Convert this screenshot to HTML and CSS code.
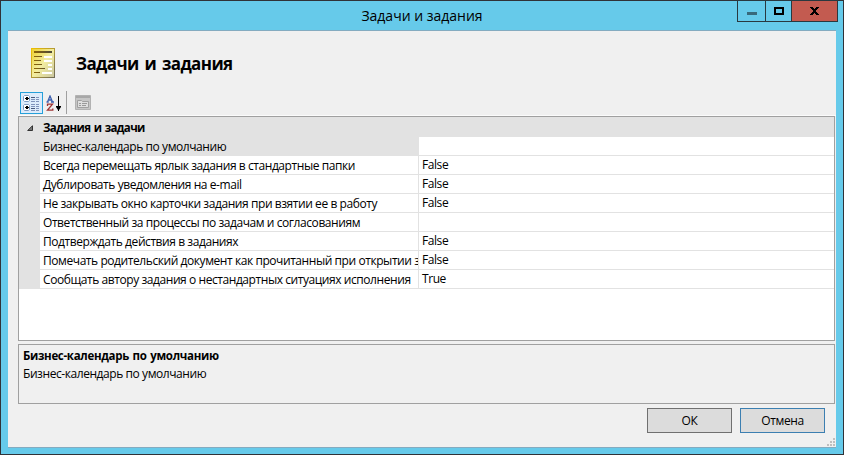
FILE: index.html
```html
<!DOCTYPE html>
<html lang="ru">
<head>
<meta charset="utf-8">
<title>Задачи и задания</title>
<link rel="stylesheet" href="styles.css">
</head>
<body>
<div class="window">
  <header class="titlebar">
    <span class="caption">Задачи и задания</span>
    <div class="controls">
      <span class="ctl min"><svg width="10" height="3"><rect width="10" height="3" fill="#38697b"/></svg></span>
      <span class="ctl max"><svg width="10" height="8"><path fill="#000" fill-rule="evenodd" d="M0 0h10v8H0zM2 2v4h6V2z"/></svg></span>
      <span class="ctl close"><svg width="9" height="8" shape-rendering="crispEdges"><path fill="#000" d="M0 0h3v1h1v1h1V1h1V0h3v1H8v1H7v1H6v2h1v1h1v1h1v1H6V7H5V6H4v1H3v1H0V7h1V6h1V5h1V3H2V2H1V1H0z"/></svg></span>
    </div>
  </header>
  <main class="client">
    <div class="heading">
      <svg width="24" height="30" viewBox="0 0 24 30">
        <defs>
          <linearGradient id="edge" x1="0" y1="0" x2="1" y2="1"><stop offset="0" stop-color="#f0c000"/><stop offset=".5" stop-color="#b39a35"/><stop offset="1" stop-color="#6e6a58"/></linearGradient>
          <linearGradient id="paper" x1="0" y1="0" x2="1" y2="1"><stop offset="0" stop-color="#ecd02c"/><stop offset=".5" stop-color="#f3eda0"/><stop offset="1" stop-color="#c9c5a0"/></linearGradient>
          <linearGradient id="ink" gradientUnits="userSpaceOnUse" x1="3" y1="0" x2="21" y2="0"><stop offset="0" stop-color="#8a6408"/><stop offset="1" stop-color="#4e4a38"/></linearGradient>
        </defs>
        <rect x=".5" y=".5" width="23" height="29" fill="url(#paper)" stroke="url(#edge)"/>
        <path fill="url(#ink)" d="M3 3h18v2H3zM3 8h8v1H3zM3 12h7v1H3zM3 16h8v1H3zM3 20h11v1H3zM3 24h6v1H3z"/>
        <path fill="#fff" d="M13 8h8v2h-8zM13 12h8v2h-8zM17 16h4v2h-4zM17 20h4v2h-4zM11 24h10v2H11z"/>
      </svg>
      <h1>Задачи и задания</h1>
    </div>
    <div class="toolbar">
      <span class="tool selected"><svg width="17" height="17">
        <path fill="#fff" stroke="#7d9cc4" d="M1.500.5h4l1 1v4l-1 1h-4l-1-1v-4zM1.500 9.500h4l1 1v4l-1 1h-4l-1-1v-4z"/>
        <path fill="#000" d="M2 3h4v1H2zM3 2h2v3H3zM2 12h4v1H2zM3 11h2v3H3z"/>
        <path fill="#46587c" d="M8 2h4v1H8zM8 13h4v1H8z"/>
        <path fill="#7f93bb" d="M13 2h3v1h-3zM8 4h4v1H8zM13 4h3v1h-3zM8 6h4v1H8zM13 6h3v1h-3zM8 9h4v1H8zM13 9h3v1h-3zM8 11h4v1H8zM13 11h3v1h-3zM13 13h3v1h-3zM8 15h4v1H8zM13 15h3v1h-3z"/>
      </svg></span>
      <span class="tool"><svg width="17" height="17">
        <path fill="none" stroke="#3c5fae" stroke-width="1.300" d="M1.500 7 4 1l2.500 6M2.300 5h3.400M.5 7h2.200M5 7h3"/>
        <path fill="none" stroke="#a03434" stroke-width="1.300" d="M1.500 11V9.200h5L1.500 15.200h5.300v-1.800"/>
        <path fill="#000" d="M12 1h1v10h2v1l-2 3v1h-1v-1l-2-3v-1h2z"/>
      </svg></span>
      <i class="divider"></i>
      <span class="tool props"><svg width="16" height="15">
        <path fill="#c6c6c6" stroke="#b2b2b2" d="M.5.5h15v14H.5z"/><path fill="#a8a8a8" d="M1 1h14v2H1z"/>
        <path fill="#dedede" stroke="#a0a0a0" d="M2.500 5.500h4l1 1h6v6h-11z"/><path fill="#999" d="M4 8h2v1H4zM7 8h5v1H7zM4 10h2v1H4zM7 10h4v1H7z"/>
      </svg></span>
    </div>
    <section class="grid">
      <div class="category"><svg width="6" height="6"><path d="M5.500.7v4.800H.7z" fill="#777" stroke="#333"/></svg><b>Задания и задачи</b></div>
      <div class="row active"><span class="name">Бизнес-календарь по умолчанию</span><span class="value"></span></div>
      <div class="row"><span class="name">Всегда перемещать ярлык задания в стандартные папки</span><span class="value">False</span></div>
      <div class="row"><span class="name">Дублировать уведомления на e-mail</span><span class="value">False</span></div>
      <div class="row"><span class="name">Не закрывать окно карточки задания при взятии ее в работу</span><span class="value">False</span></div>
      <div class="row"><span class="name">Ответственный за процессы по задачам и согласованиям</span><span class="value"></span></div>
      <div class="row"><span class="name">Подтверждать действия в заданиях</span><span class="value">False</span></div>
      <div class="row"><span class="name">Помечать родительский документ как прочитанный при открытии з</span><span class="value">False</span></div>
      <div class="row"><span class="name">Сообщать автору задания о нестандартных ситуациях исполнения</span><span class="value">True</span></div>
    </section>
    <section class="help">
      <b>Бизнес-календарь по умолчанию</b>
      <p>Бизнес-календарь по умолчанию</p>
    </section>
    <footer><button>ОК</button><button class="focus">Отмена</button></footer>
    <svg class="grip" width="8" height="8"><path fill="#bfbfbf" d="M6 0h2v2H6zM3 3h2v2H3zM6 3h2v2H6zM0 6h2v2H0zM3 6h2v2H3zM6 6h2v2H6z"/></svg>
  </main>
</div>
</body>
</html>
```
FILE: styles.css
```css
* { box-sizing: border-box; }
body { margin: 0; font: 12px/18px "Open Sans", "Noto Sans", sans-serif; letter-spacing: -.43px; color: #000; }
svg { display: block; flex: none; }
b { font-size: 11.5px; letter-spacing: -.31px; word-spacing: 1px; }
.window { width: 844px; height: 455px; border: 1px solid #303237; background: #66caea; padding: 0 7px 6px; display: flex; flex-direction: column; }
.titlebar { height: 29px; flex: none; position: relative; text-align: center; }
.caption { font-size: 14px; line-height: 30px; letter-spacing: 0; }
.controls { position: absolute; right: -2px; top: -1px; height: 22px; display: flex; border: 1px solid #29383f; }
.ctl { display: flex; justify-content: center; align-items: center; border-left: 1px solid #29383f; }
.ctl:first-child { border-left: 0; }
.min { width: 27px; padding-top: 5px; }
.max { width: 26px; }
.close { width: 46px; background: #c35b50; }
.client { flex: 1; background: #f0f0f0; border-top: 1px solid #84abc0; border-bottom: 1px solid #84abc0; padding: 0 0 0 10px; display: flex; flex-direction: column; position: relative; }
.heading { height: 60px; padding: 17px 0 0 13px; display: flex; }
h1 { margin: 0 0 0 21px; font-size: 17px; line-height: 32px; font-weight: 700; letter-spacing: -.6px; word-spacing: 2px; white-space: nowrap; }
.toolbar { height: 25px; border-bottom: 1px solid #fbfbfb; display: flex; padding-left: 2px; }
.tool { width: 23px; height: 22px; margin-top: 1px; display: flex; align-items: center; justify-content: center; }
.selected { border: 1px solid #26a0da; background: #dcebfb; }
.divider { width: 1px; height: 23px; background: #a0a0a0; margin: 0 5px 0 0; }
.props { margin-left: -1px; margin-top: 0; }
.grid { width: 817px; height: 225px; border: 1px solid #a0a0a0; background: #fff; flex: none; }
.category { height: 20px; background: #e2e2e2; display: flex; align-items: center; padding: 1px 0 0 8px; }
.category b { margin-left: 10px; letter-spacing: -.62px; white-space: nowrap; }
.row { height: 19px; border-left: 21px solid #e2e2e2; display: flex; }
.name { width: 379px; border-right: 1px solid #e2e2e2; border-bottom: 1px solid #e2e2e2; padding-left: 3px; line-height: 19px; overflow: hidden; white-space: nowrap; }
.active .name { background: #e2e2e2; }
.value { flex: 1; border-bottom: 1px solid #e2e2e2; padding-left: 3px; line-height: 18px; }
.help { width: 817px; height: 60px; margin-top: 3px; border: 1px solid #a0a0a0; padding: 2px 4px; flex: none; }
.help p { margin: 0; }
footer { display: flex; justify-content: flex-end; gap: 8px; padding: 4px 11px 0 0; }
button { width: 85px; height: 25px; padding: 0 0 1px; font: 12px "Open Sans", sans-serif; letter-spacing: -.4px; background: #dcdcdc; border: 1px solid #707070; }
.focus { border-color: #3c7fb1; }
.grip { position: absolute; right: 1px; bottom: 1px; }
```
